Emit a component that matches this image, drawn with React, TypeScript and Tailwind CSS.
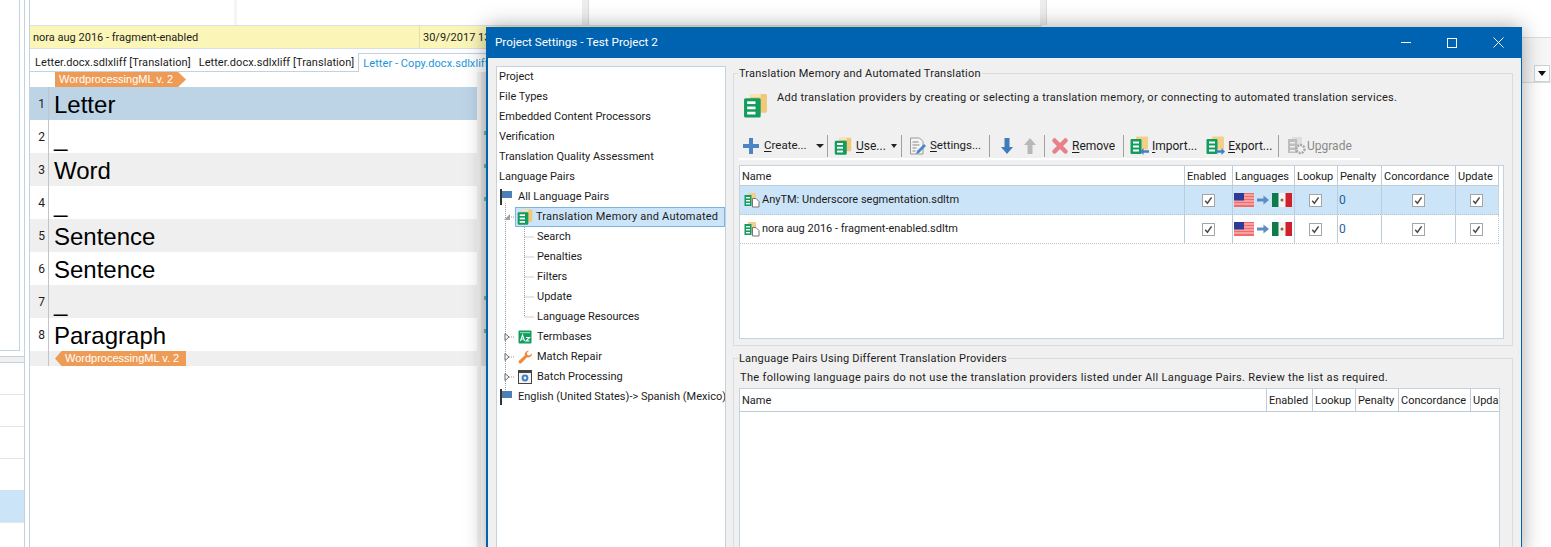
import type { ReactNode } from "react";

const ui = "font-['Roboto',sans-serif] text-[11px] text-[#1c1c1c]";
const arial = "font-['Liberation_Sans',sans-serif]";

// ---- icons ----
const TmIcon = ({ size = 16 }: { size?: number }) => (
  <svg width={size} height={size} viewBox="0 0 24 24" className="shrink-0">
    <rect x="7" y="1" width="16" height="18" rx="1.5" fill="#f0c878" />
    <rect x="7" y="1" width="10" height="3" fill="#f8e4b8" />
    <rect x="1" y="5" width="16" height="18.5" rx="1.5" fill="#129c5e" />
    <rect x="4" y="8" width="8" height="2.6" fill="#fff" />
    <rect x="4" y="13" width="8" height="2.6" fill="#fff" />
    <rect x="4" y="18" width="8" height="2.6" fill="#fff" />
  </svg>
);

const TmFileIcon = () => (
  <svg width="16" height="16" viewBox="0 0 16 16" className="shrink-0">
    <rect x="4" y="1" width="8" height="11" fill="#f3cf8c" />
    <rect x="0.5" y="3" width="7" height="11" fill="#129c5e" />
    <rect x="2" y="5" width="4" height="1.4" fill="#fff" />
    <rect x="2" y="8" width="4" height="1.4" fill="#fff" />
    <rect x="2" y="11" width="4" height="1.4" fill="#fff" />
    <path d="M8.5 6.5h3.5l3 3v5.500h-6.500z" fill="#fff" stroke="#777" strokeWidth="1" />
  </svg>
);

const Flag = () => (
  <svg width="16" height="16" viewBox="0 0 16 16" className="shrink-0">
    <rect x="1" y="0" width="2" height="16" fill="#333" />
    <path d="M3 2h10v7H3z" fill="#4a7fb8" />
  </svg>
);

const Plus = () => (
  <svg width="18" height="18" viewBox="0 0 18 18" className="shrink-0">
    <path d="M7 1h4v6h6v4h-6v6H7v-6H1V7h6z" fill="#4a86c5" />
  </svg>
);

const SettingsIcon = () => (
  <svg width="18" height="18" viewBox="0 0 18 18" className="shrink-0">
    <path d="M1.500 1h9l3.500 3.500V17h-12.500z" fill="#f4f4f4" stroke="#9a9a9a" strokeWidth="1" />
    <path d="M3.500 5h6M3.500 8h7M3.500 11h4M3.500 14h3" stroke="#8a8a8a" strokeWidth="1" />
    <path d="M8 14l7-7 2 2-7 7-3 1z" fill="#4a86c5" />
  </svg>
);

const VArrow = ({ up = false }: { up?: boolean }) => (
  <svg width="14" height="18" viewBox="0 0 14 18" className="shrink-0">
    {up ? (
      <path d="M7 1l6 7H9.500v9h-5V8H1z" fill="#b8b8b8" />
    ) : (
      <path d="M7 17L1 10h3.500V1h5v9H13z" fill="#3f7cbc" />
    )}
  </svg>
);

const RemoveIcon = () => (
  <svg width="18" height="18" viewBox="0 0 18 18" className="shrink-0">
    <path d="M3.500 3.500l11 11M14.500 3.500l-11 11" stroke="#e8808a" strokeWidth="4.500" strokeLinecap="round" />
  </svg>
);

const TransferIcon = ({ dir }: { dir: "in" | "out" }) => (
  <svg width="20" height="20" viewBox="0 0 20 20" className="shrink-0">
    <rect x="6" y="0.500" width="12" height="13" rx="1" fill="#f3cf8c" />
    <rect x="0.500" y="3" width="11" height="15" rx="1" fill="#129c5e" />
    <rect x="3" y="5.500" width="6" height="2" fill="#fff" />
    <rect x="3" y="9.500" width="6" height="2" fill="#fff" />
    <rect x="3" y="13.500" width="6" height="2" fill="#fff" />
    {dir === "in" ? (
      <path d="M10 15.500l3.500-3.500v2.300H19v2.400h-5.500V19z" fill="#3f7fc4" />
    ) : (
      <path d="M19 15.500L15.500 12v2.300H10v2.400h5.500V19z" fill="#3f7fc4" />
    )}
  </svg>
);

const UpgradeIcon = () => (
  <svg width="20" height="20" viewBox="0 0 20 20" className="shrink-0">
    <rect x="5" y="1" width="10" height="12" fill="#dedede" />
    <rect x="1" y="3" width="9" height="14" fill="#bdbdbd" />
    <rect x="3" y="6" width="5" height="1.500" fill="#f0f0f0" />
    <rect x="3" y="10" width="5" height="1.500" fill="#f0f0f0" />
    <rect x="3" y="14" width="5" height="1.500" fill="#f0f0f0" />
    <circle cx="13.500" cy="13" r="4" fill="#f0f0f0" stroke="#a8a8a8" strokeWidth="2.500" strokeDasharray="2 1" />
  </svg>
);

const TermbaseIcon = () => (
  <svg width="14" height="14" viewBox="0 0 14 14" className="shrink-0">
    <rect x="0.500" y="0.500" width="13" height="13" rx="1" fill="#129c5e" />
    <rect x="2" y="2" width="10" height="1.200" fill="#8fd6b4" />
    <path d="M2.500 11l2-6 2 6M3.300 9h2.400M8 7.500h3.500L8 11h3.500" stroke="#fff" strokeWidth="1.100" fill="none" />
  </svg>
);

const WrenchIcon = () => (
  <svg width="15" height="15" viewBox="0 0 15 15" className="shrink-0">
    <path
      d="M14 3.500a3.800 3.800 0 0 1-5 3.800L3.500 13a1.700 1.700 0 0 1-2.500-2.300L6.800 5.200A3.800 3.800 0 0 1 11 .800L8.800 3l.6 2 2 .6z"
      fill="#ee8a3a"
    />
  </svg>
);

const BatchIcon = () => (
  <svg width="14" height="14" viewBox="0 0 14 14" className="shrink-0">
    <rect x="0.500" y="0.500" width="13" height="13" fill="#f4f4f4" stroke="#444" />
    <rect x="0.500" y="0.500" width="13" height="2.500" fill="#444" />
    <circle cx="7" cy="8" r="2.400" fill="none" stroke="#3f7fc4" strokeWidth="2" />
  </svg>
);

const Expander = ({ open = false }: { open?: boolean }) => (
  <svg width="8" height="8" viewBox="0 0 8 8" className="shrink-0">
    {open ? <path d="M7 1v6H1z" fill="#a0a0a0" /> : <path d="M2 0.500l4 3.500-4 3.500z" fill="#fff" stroke="#666" />}
  </svg>
);

const UsFlag = () => (
  <svg width="20" height="14" viewBox="0 0 20 14" className="shrink-0">
    <rect width="20" height="14" fill="#f26b6b" />
    <path d="M0 2h20M0 5h20M0 8h20M0 11h20" stroke="#fbd6d6" strokeWidth="1" />
    <rect width="10" height="7.500" fill="#2d3a98" />
  </svg>
);

const MxFlag = () => (
  <svg width="20" height="14" viewBox="0 0 20 14" className="shrink-0">
    <rect width="20" height="14" fill="#f4f4f4" />
    <rect width="6.500" height="14" fill="#0f7a4a" />
    <rect x="13.500" width="6.500" height="14" fill="#d0202c" />
    <circle cx="10" cy="7" r="1.500" fill="#8a6a3a" />
  </svg>
);

const LangArrow = () => (
  <svg width="12" height="10" viewBox="0 0 13 10" className="shrink-0">
    <path d="M0 3.500h7V0l6 5-6 5V6.500H0z" fill="#5b8fc4" />
  </svg>
);

const Check = () => (
  <span className="mr-px flex h-[13px] w-[13px] items-center justify-center border border-[#a5a5a5] bg-white">
    <svg width="9" height="9" viewBox="0 0 9 9">
      <path d="M1.200 4.800l2.200 2.400 4.200-5.800" stroke="#4a4a4a" strokeWidth="1.500" fill="none" />
    </svg>
  </span>
);

// ---- background application ----
const segments = [
  { n: 1, text: "Letter", bg: "bg-[#bdd4e7]", mark: false },
  { n: 2, text: "_", bg: "bg-white", mark: true },
  { n: 3, text: "Word", bg: "bg-[#efefef]", mark: true },
  { n: 4, text: "_", bg: "bg-white", mark: true },
  { n: 5, text: "Sentence", bg: "bg-[#efefef]", mark: false },
  { n: 6, text: "Sentence", bg: "bg-white", mark: false },
  { n: 7, text: "_", bg: "bg-[#efefef]", mark: true },
  { n: 8, text: "Paragraph", bg: "bg-white", mark: true },
];

const LeftRail = () => (
  <div className="w-[30px] shrink-0 border-r border-[#c3d2dd]">
    <div className="flex h-full w-[25px] flex-col border-r border-[#c3d2dd]">
      <div className="h-[351px] w-[20px] shrink-0 border-r border-b border-[#c3d2dd]" />
      <div className="mt-[5px] h-[7px] shrink-0 border-y border-[#c3d2dd] bg-[#f0f0f0]" />
      <div className="h-[32px] shrink-0 border-b border-[#e2e6ea]" />
      <div className="h-[32px] shrink-0 border-b border-[#e2e6ea]" />
      <div className="h-[32px] shrink-0 border-b border-[#e2e6ea]" />
      <div className="h-[31px] shrink-0" />
      <div className="h-[33px] shrink-0 border-b border-[#e2e6ea] bg-[#cce4f7]" />
    </div>
  </div>
);

const Editor = () => (
  <div className="flex w-[447px] flex-col">
    <div className="flex h-[15px]">
      <div className="w-[19px]" />
      <div className="pl-[6px]">
        <div className={`${arial} h-[15px] w-[131px] bg-[#ee9b55] pl-[4px] text-[11px] leading-[15px] text-white [clip-path:polygon(0_0,94%_0,100%_50%,94%_100%,0_100%)]`}>
          WordprocessingML v. 2
        </div>
      </div>
    </div>
    {segments.map((s) => (
      <div key={s.n} className={`flex h-[33px] ${s.bg}`}>
        <div className={`${ui} flex w-[19px] items-center justify-end border-r border-[#c4c4c4] pr-[3px] pt-px text-[12px]`}>
          {s.n}
        </div>
        <div className={`${arial} h-[33px] pl-[5px] text-[24px] leading-[35px] text-black`}>{s.text}</div>
      </div>
    ))}
    <div className="flex h-[15px] bg-[#efefef]">
      <div className="w-[19px] border-r border-[#c4c4c4]" />
      <div className="pl-[6px]">
        <div className={`${arial} h-[15px] w-[131px] bg-[#ee9b55] pl-[10px] text-[11px] leading-[15px] text-white [clip-path:polygon(5%_0,100%_0,100%_100%,5%_100%,0_50%)]`}>
          WordprocessingML v. 2
        </div>
      </div>
    </div>
  </div>
);

const EditorMargin = () => (
  <>
    <div className="w-[4px] bg-[#f4f4f4]" />
    <div className="flex h-[294px] w-[5px] flex-col bg-[#e6e6e6] pt-[15px]">
      {segments.map((s) => (
        <div key={s.n} className="flex h-[33px] items-center justify-end pb-[7px]">
          {s.mark && <div className="h-[4px] w-[2px] bg-[#6fb79a]" />}
        </div>
      ))}
    </div>
  </>
);

const MainArea = () => (
  <div className="flex flex-1 flex-col">
    <div className="flex h-[25px] shrink-0">
      <div className="w-[207px] border-r-[3px] border-[#f5f5f5]" />
      <div className="w-[352px] border-r border-[#dcdcdc] bg-[linear-gradient(to_right,white_345px,#ededed_345px)]" />
      <div className="w-[458px] border-r border-[#dcdcdc] bg-[linear-gradient(to_right,white_451px,#ededed_451px)]" />
    </div>
    <div className="flex flex-1">
      <div className="flex w-[1017px] flex-col">
        <div className={`${ui} flex h-[24px] w-[1012px] shrink-0 border-y border-[#d9dfe3] bg-[#fbf6b8] text-[10.4px] leading-[24px]`}>
          <div className="w-[390px] border-r border-[#e2e0b0] pl-[3px]">nora aug 2016 - fragment-enabled</div>
          <div className="pl-[3px] text-[11px]">30/9/2017 13:02</div>
        </div>
        <div className={`${ui} flex h-[23px] shrink-0 items-end border-b border-[#c3d2dd] pl-[5px] text-[11.1px] tracking-[0.06px]`}>
          <div className="h-[18px] pr-[8px] leading-[19px]">Letter.docx.sdlxliff [Translation]</div>
          <div className="h-[18px] pr-[4px] leading-[19px]">Letter.docx.sdlxliff [Translation]</div>
          <div className="-mb-px h-[19px] border-x border-t border-[#c3d2dd] bg-white px-[4px] leading-[19px] text-[#1a96d8]">
            Letter - Copy.docx.sdlxliff [Translation]
          </div>
        </div>
        <div className="flex flex-1">
          <Editor />
          <EditorMargin />
        </div>
      </div>
      <div className="mt-[12px] flex h-[46px] flex-1 items-end justify-end border-y border-[#dcdcdc] bg-[#f6f6f6]">
        <div className="mr-[1px] flex h-[17px] w-[16px] items-center justify-center border border-[#c8d4dc] bg-white">
          <div className="h-0 w-0 border-x-[4px] border-t-[5px] border-x-transparent border-t-[#111]" />
        </div>
      </div>
    </div>
  </div>
);

// ---- dialog ----
type TreeRow = { label: string; indent: number; icon?: ReactNode; expander?: ReactNode; selected?: boolean };

const treeRows: TreeRow[] = [
  { label: "Project", indent: 2 },
  { label: "File Types", indent: 2 },
  { label: "Embedded Content Processors", indent: 2 },
  { label: "Verification", indent: 2 },
  { label: "Translation Quality Assessment", indent: 2 },
  { label: "Language Pairs", indent: 2 },
  { label: "All Language Pairs", indent: 2, icon: <Flag /> },
  { label: "Translation Memory and Automated", indent: 19, icon: <TmIcon />, expander: <Expander open />, selected: true },
  { label: "Search", indent: 40 },
  { label: "Penalties", indent: 40 },
  { label: "Filters", indent: 40 },
  { label: "Update", indent: 40 },
  { label: "Language Resources", indent: 40 },
  { label: "Termbases", indent: 21, icon: <TermbaseIcon />, expander: <Expander /> },
  { label: "Match Repair", indent: 21, icon: <WrenchIcon />, expander: <Expander /> },
  { label: "Batch Processing", indent: 21, icon: <BatchIcon />, expander: <Expander /> },
  { label: "English (United States)-> Spanish (Mexico)", indent: 2, icon: <Flag /> },
];

const Tree = () => (
  <div className="relative h-[490px] w-[230px] shrink-0 overflow-hidden border border-[#c3d2dd] bg-white">
    <svg className="absolute top-0 left-0" width="60" height="340" fill="none" stroke="#9a9a9a" strokeDasharray="1 1">
      <path d="M8.500 136v196" />
      <path d="M27.500 158v92h10M27.500 170h10M27.500 190h10M27.500 210h10M27.500 230h10" />
      <path d="M12 150h5M12 270h5M12 290h5M12 310h5" />
    </svg>
    {treeRows.map((r) => (
      <div key={r.label} className="relative flex h-5 items-center whitespace-nowrap">
        {r.expander && <span className="absolute left-[6px] flex">{r.expander}</span>}
        <div
          className={`flex h-5 flex-1 items-center gap-[3px] ${r.selected ? "ml-[18px] border border-[#7db5dc] bg-[#cce4f7] tracking-[0.2px]" : ""}`}
          style={{ paddingLeft: r.selected ? 1 : r.indent }}
        >
          {r.icon && <span className="relative flex w-[16px]">{r.icon}</span>}
          <span>{r.label}</span>
        </div>
      </div>
    ))}
  </div>
);

const U = ({ children }: { children: ReactNode }) => <span className="underline underline-offset-2">{children}</span>;
const Sep = () => <div className="h-[22px] w-px shrink-0 bg-[#a0a0a0]" />;

const Toolbar = () => (
  <div className="mt-[17px] ml-[5px] flex h-[25px] w-[621px] items-center border-b-2 border-white pb-[2px] text-[12px]">
    <div className="flex w-[88px] items-center gap-[4px] pl-[3px]">
      <Plus />
      <span className="text-[11.5px]"><U>C</U>reate...</span>
      <div className="ml-[5px] h-0 w-0 border-x-[4px] border-t-[4px] border-x-transparent border-t-[#222]" />
    </div>
    <Sep />
    <div className="flex w-[73px] items-center gap-[4px] pl-[6px]">
      <TmIcon size={18} />
      <span><U>U</U>se...</span>
      <div className="ml-[1px] h-0 w-0 border-x-[3px] border-t-[4px] border-x-transparent border-t-[#222]" />
    </div>
    <Sep />
    <div className="flex w-[87px] items-center gap-[3px] pl-[7px]">
      <SettingsIcon />
      <span className="text-[11.5px]"><U>S</U>ettings...</span>
    </div>
    <Sep />
    <div className="flex w-[54px] items-center gap-[9px] pl-[10px]">
      <VArrow />
      <VArrow up />
    </div>
    <Sep />
    <div className="flex w-[78px] items-center gap-[3px] pl-[6px]">
      <RemoveIcon />
      <span><U>R</U>emove</span>
    </div>
    <Sep />
    <div className="flex w-[154px] items-center gap-[2px] pl-[6px]">
      <TransferIcon dir="in" />
      <span><U>I</U>mport...</span>
      <div className="w-[5px]" />
      <TransferIcon dir="out" />
      <span><U>E</U>xport...</span>
    </div>
    <Sep />
    <div className="flex items-center pl-[8px] text-[#8a8a8a]">
      <UpgradeIcon />
      <span>U<U>p</U>grade</span>
    </div>
  </div>
);

const topCols = "grid-cols-[444px_48px_62px_43px_44px_74px_44px]";
const topHeaders = ["Name", "Enabled", "Languages", "Lookup", "Penalty", "Concordance", "Update"];
const tmRows = [
  { name: "AnyTM: Underscore segmentation.sdltm", selected: true },
  { name: "nora aug 2016 - fragment-enabled.sdltm", selected: false },
];

const ProviderGrid = () => (
  <div className="mx-[5px] mt-[5px] h-[174px] w-[765px] border border-[#c3d2dd] bg-white">
    <div className={`grid h-[20px] w-[759px] ${topCols} border-b border-[#bccdd9]`}>
      {topHeaders.map((h, i) => (
        <div key={h} className={`pl-[2px] leading-[21px] ${i > 0 ? "border-l border-[#bccdd9]" : ""} ${i === 6 ? "border-r" : ""}`}>{h}</div>
      ))}
    </div>
    {tmRows.map((r) => (
      <div key={r.name} className={`grid h-[29px] w-[759px] ${topCols} border-b border-dotted border-[#b5c3cc] ${r.selected ? "bg-[#cce4f7]" : ""}`}>
        <div className="flex items-center gap-[2px] pl-[4px]">
          <TmFileIcon />
          <span className="pt-px">{r.name}</span>
        </div>
        <div className="flex items-center justify-center border-l border-[#bccdd9]"><Check /></div>
        <div className="flex items-center gap-[3px] border-l border-[#bccdd9] pl-[1px]"><UsFlag /><LangArrow /><MxFlag /></div>
        <div className="flex items-center justify-center border-l border-[#bccdd9]"><Check /></div>
        <div className="flex items-center border-l border-[#bccdd9] pl-[1px] text-[12px] text-[#1a5fa0]">0</div>
        <div className="flex items-center justify-center border-l border-[#bccdd9]"><Check /></div>
        <div className="flex items-center justify-center border-x border-[#bccdd9] [border-right-style:dotted]"><Check /></div>
      </div>
    ))}
  </div>
);

const bottomCols = "grid-cols-[526px_46px_43px_43px_72px_30px]";
const bottomHeaders = ["Name", "Enabled", "Lookup", "Penalty", "Concordance", "Upda"];

const PairsGrid = () => (
  <div className="mx-[5px] mt-[3px] h-[200px] w-[761px] border border-[#c3d2dd] bg-white">
    <div className={`grid h-[23px] ${bottomCols} overflow-hidden border-b border-[#bccdd9]`}>
      {bottomHeaders.map((h, i) => (
        <div key={h} className={`pl-[2px] leading-[24px] ${i > 0 ? "border-l border-[#bccdd9]" : ""}`}>{h}</div>
      ))}
    </div>
  </div>
);

const GroupBox = ({ title, className, children }: { title: string; className: string; children: ReactNode }) => (
  <div className={`relative border border-[#dcdcdc] ${className}`}>
    <div className="absolute -top-[8px] left-[4px] bg-[#f0f0f0] px-px leading-[16px] tracking-[0.2px]">{title}</div>
    {children}
  </div>
);

const Dialog = () => (
  <div className={`${ui} absolute top-[27px] left-[486px] h-[530px] w-[1036px] border-r border-l-2 border-[#0063b1] bg-[#f0f0f0] shadow-[0_0_20px_rgba(0,0,0,0.35)]`}>
    <div className="flex h-[31px] items-center justify-between bg-[#0063b1] pl-[7px] text-[11.7px] text-white">
      <span className="pt-px">Project Settings - Test Project 2</span>
      <div className="flex items-center">
        <div className="flex h-[31px] w-[46px] items-center justify-center">
          <div className="h-px w-[10px] bg-white" />
        </div>
        <div className="flex h-[31px] w-[46px] items-center justify-center">
          <div className="h-[10px] w-[10px] border border-white" />
        </div>
        <div className="flex h-[31px] w-[46px] items-center justify-center">
          <svg width="11" height="11" viewBox="0 0 11 11"><path d="M.5.500l10 10M10.500.500l-10 10" stroke="#fff" /></svg>
        </div>
      </div>
    </div>
    <div className="flex gap-[7px] pt-[8px] pl-[8px]">
      <Tree />
      <div className="flex w-[780px] flex-col pt-[7px]">
        <GroupBox title="Translation Memory and Automated Translation" className="h-[273px]">
          <div className="mt-[16px] ml-[9px] flex items-start gap-[9px]">
            <div className="mt-[3px]"><TmIcon size={25} /></div>
            <span className="leading-[15px] tracking-[0.28px]">Add translation providers by creating or selecting a translation memory, or connecting to automated translation services.</span>
          </div>
          <Toolbar />
          <ProviderGrid />
        </GroupBox>
        <GroupBox title="Language Pairs Using Different Translation Providers" className="mt-[12px] h-[200px]">
          <p className="mt-[11px] ml-[6px] leading-[15px] tracking-[0.33px]">
            The following language pairs do not use the translation providers listed under All Language Pairs. Review the list as required.
          </p>
          <PairsGrid />
        </GroupBox>
      </div>
    </div>
  </div>
);

export default function App() {
  return (
    <div className="relative flex h-[547px] w-[1551px] overflow-hidden bg-white">
      <LeftRail />
      <MainArea />
      <Dialog />
    </div>
  );
}
